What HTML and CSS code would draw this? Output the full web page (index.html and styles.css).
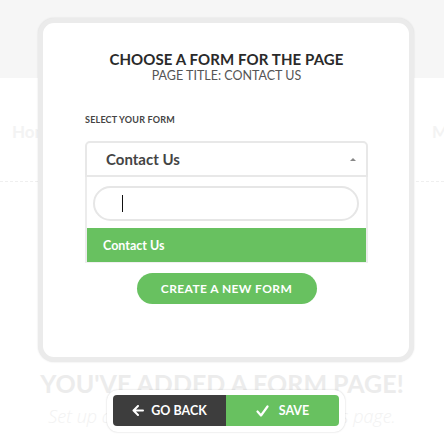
FILE: index.html
```html
<!DOCTYPE html>
<html>
<head>
<meta charset="utf-8">
<link rel="stylesheet" href="styles.css">
</head>
<body>
<div class="page">
  <div class="topband"></div>
  <nav class="nav">
    <span class="nav-item">Home</span>
    <span class="nav-item nav-last">Menu</span>
  </nav>
  <section class="hero">
    <h1 class="hero-title">YOU'VE ADDED A FORM PAGE!</h1>
    <p class="hero-sub">Set up a form for visitors to use on this page.</p>
  </section>
</div>

<div class="modal">
  <div class="modal-inner">
    <h2 class="modal-title">CHOOSE A FORM FOR THE PAGE</h2>
    <p class="modal-sub">PAGE TITLE: CONTACT US</p>
    <label class="field-label">SELECT YOUR FORM</label>
    <div class="select">
      <div class="select-head">
        <span class="select-value">Contact Us</span>
        <span class="select-arrow"></span>
      </div>
      <div class="dropdown">
        <div class="search"><span class="caret"></span></div>
        <div class="option">Contact Us</div>
      </div>
    </div>
    <div class="create-wrap"><button class="btn-create">CREATE A NEW FORM</button></div>
  </div>
</div>

<div class="actions">
  <button class="btn btn-back">
    <svg width="12" height="11" viewBox="0 0 12 11"><path d="M11 5.5H2M6 1L1.5 5.5L6 10" fill="none" stroke="#fff" stroke-width="2" stroke-linecap="round" stroke-linejoin="round"/></svg>
    <span>GO BACK</span>
  </button>
  <button class="btn btn-save">
    <svg width="13" height="12" viewBox="0 0 13 12"><path d="M1.5 6.5L5 10.5L11.5 1.5" fill="none" stroke="#fff" stroke-width="2.2" stroke-linecap="round" stroke-linejoin="round"/></svg>
    <span>SAVE</span>
  </button>
</div>
</body>
</html>
```

FILE: styles.css
```css
* { box-sizing: border-box; }
html, body { margin: 0; padding: 0; }
body {
  width: 444px;
  height: 446px;
  overflow: hidden;
  background: #fff;
  font-family: Lato, "Open Sans", Arial, sans-serif;
  position: relative;
}
.page { width: 444px; overflow: hidden; }
.topband { height: 78px; background: #f6f6f6; }
.nav {
  height: 104px;
  border-bottom: 1px dashed #efefef;
  display: flex;
  justify-content: space-between;
  align-items: flex-start;
  padding: 43px 0 0 12px;
  overflow: hidden;
}
.nav-item { font-size: 17px; font-weight: 700; color: #f3f3f3; }
.nav-last { width: 12px; overflow: hidden; white-space: nowrap; }
.hero { text-align: center; padding-top: 186px; }
.hero-title {
  margin: 0;
  font-size: 25px;
  font-weight: 700;
  color: #ececec;
  letter-spacing: 0;
}
.hero-sub {
  margin: 6px 0 0;
  font-family: "Open Sans", sans-serif;
  font-style: italic;
  font-weight: 300;
  font-size: 18px;
  color: #f2f2f2;
}

.modal {
  position: absolute;
  left: 38px;
  top: 18px;
  width: 376px;
  height: 344px;
  border: 5px solid #ebebeb;
  border-radius: 16px;
  box-shadow: 0 0 2px rgba(0,0,0,0.12);
  background: #fff;
}
.modal-inner {
  height: 100%;
  padding: 27px 41px 0 42px;
  display: flex;
  flex-direction: column;
}
.modal-title {
  margin: 0;
  text-align: center;
  font-size: 15px;
  line-height: 18px;
  font-weight: 700;
  color: #2a2a2a;
  letter-spacing: 0.1px;
}
.modal-sub {
  margin: 0;
  text-align: center;
  font-size: 12.5px;
  line-height: 15px;
  color: #555;
}
.field-label {
  margin-top: 32px;
  font-size: 9px;
  line-height: 10px;
  font-weight: 700;
  color: #444;
  letter-spacing: 0.2px;
}
.select { margin-top: 16px; }
.select-head {
  height: 36px;
  border: 2px solid #e8e8e8;
  border-radius: 5px 5px 0 0;
  display: flex;
  align-items: center;
  justify-content: space-between;
  padding: 0 10px 0 19px;
}
.select-value { font-size: 15px; font-weight: 700; color: #444; }
.select-arrow {
  width: 0; height: 0;
  border-left: 3px solid transparent;
  border-right: 3px solid transparent;
  border-bottom: 3px solid #888;
}
.dropdown {
  border: 2px solid #ececec;
  border-top: 0;
  border-bottom: 1px solid #f0f0f0;
  padding-top: 9px;
}
.search {
  margin: 0 7px 7px 6px;
  height: 35px;
  border: 2px solid #e6e6e6;
  border-radius: 18px;
  position: relative;
}
.caret {
  position: absolute;
  left: 27px;
  top: 7px;
  width: 1px;
  height: 17px;
  background: #111;
}
.option {
  height: 34px;
  background: #68c160;
  color: #fff;
  font-size: 12.5px;
  font-weight: 700;
  display: flex;
  align-items: center;
  padding-left: 16px;
}
.create-wrap { display: flex; justify-content: center; margin-top: 10px; }
.btn-create {
  width: 180px;
  height: 31px;
  border: 0;
  border-radius: 16px;
  background: #68c160;
  color: #fff;
  font-family: inherit;
  font-size: 12px;
  font-weight: 700;
  letter-spacing: 0.4px;
}

.actions {
  position: absolute;
  left: 107px;
  top: 390px;
  width: 238px;
  height: 42px;
  padding: 5px 6px;
  background: #fff;
  border-radius: 11px;
  box-shadow: 0 0 2px rgba(0,0,0,0.2);
  display: flex;
}
.btn {
  flex: 1;
  border: 0;
  height: 31px;
  display: flex;
  align-items: center;
  justify-content: center;
  gap: 7px;
  color: #fff;
  font-family: inherit;
  font-size: 12.5px;
  font-weight: 700;
}
.btn-back { background: #3d3d3d; border-radius: 4px 0 0 4px; }
.btn-save { background: #68c160; border-radius: 0 4px 4px 0; gap: 10px; }
```
